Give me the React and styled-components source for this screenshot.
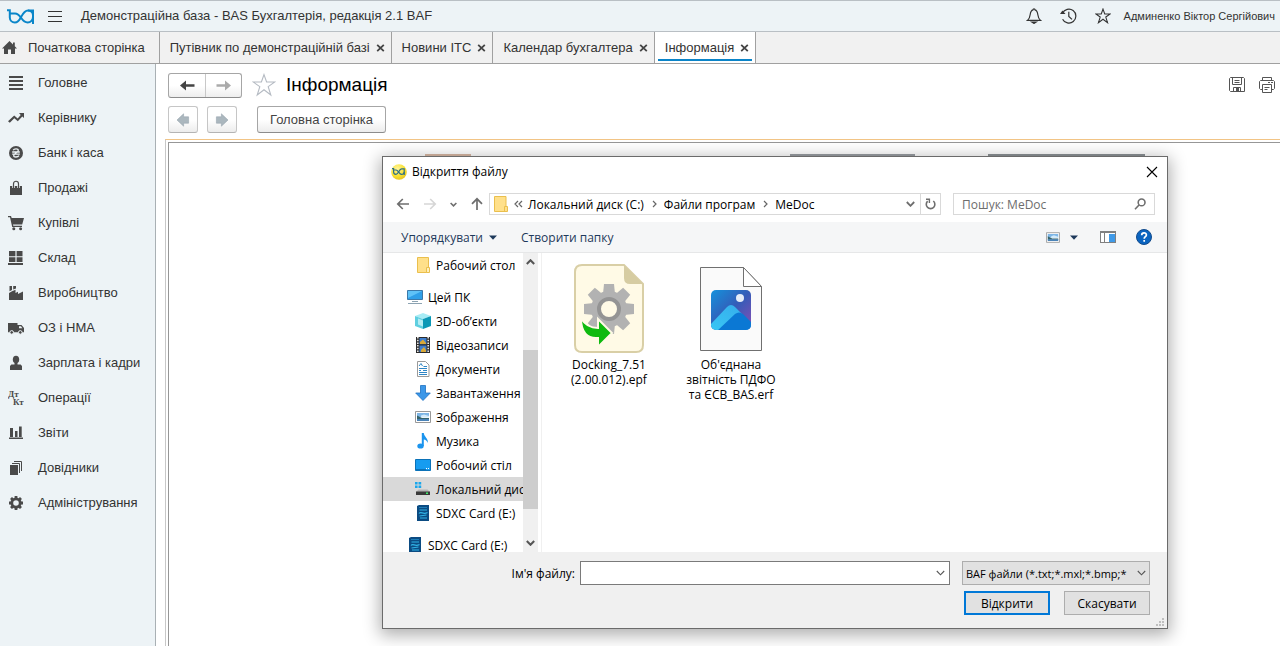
import React from 'react';
import styled, { createGlobalStyle, css } from 'styled-components';

const uiFont = '"Liberation Sans", Arial, sans-serif';
const dialogFont = '"Open Sans", "Noto Sans", sans-serif';

const GlobalStyle = createGlobalStyle`
  *, *::before, *::after { box-sizing: border-box; }
  body {
    margin: 0;
    background: #fff;
    color: #333;
    font: 13px/16px ${uiFont};
    overflow: hidden;
  }
  button, input, select { font: inherit; color: inherit; margin: 0; }
  svg { display: block; flex: none; }
  h1, h2, ul, nav { margin: 0; padding: 0; list-style: none; }
`;

/* ---------- application shell ---------- */

const Page = styled.div`
  display: flex;
  flex-direction: column;
  min-height: 100vh;
`;

const TopBar = styled.header`
  display: flex;
  align-items: center;
  height: 32px;
  padding: 0 5px 0 7px;
  background: #edf3f6;
  border-top: 1px solid #b9bfc4;
  border-bottom: 1px solid #b9bfc4;
`;

const PlainButton = styled.button`
  display: flex;
  align-items: center;
  justify-content: center;
  padding: 0;
  border: 0;
  background: none;
  cursor: pointer;
`;

const MenuButton = styled(PlainButton)`
  margin: 0 19px 0 13px;
`;

const AppTitle = styled.div`
  flex: 1;
  white-space: nowrap;
`;

const TopActions = styled.div`
  display: flex;
  gap: 18px;
  margin-right: 13px;
`;

const UserLink = styled.a`
  color: #333;
  font-size: 11px;
  text-decoration: none;
  white-space: nowrap;
`;

const TabStrip = styled.nav`
  display: flex;
  height: 32px;
  background: #f1f1f1;
  border-bottom: 1px solid #a0a0a0;
`;

const Tab = styled.div`
  position: relative;
  display: flex;
  align-items: center;
  gap: 6px;
  padding: 0 6px 0 10px;
  border-right: 1px solid #a0a0a0;
  white-space: nowrap;
  ${(p) => p.$home && css`
    gap: 11px;
    padding: 0 14px 0 2px;
  `}
  ${(p) => p.$active && css`
    background: #fff;
    &::after {
      content: '';
      position: absolute;
      left: 3px;
      right: 3px;
      bottom: 2px;
      height: 2px;
      background: #0a84c8;
    }
  `}
`;

const TabLabel = styled.a`
  color: #333;
  text-decoration: none;
`;

const Main = styled.div`
  display: flex;
  flex: 1;
`;

const Sidebar = styled.nav`
  flex: none;
  width: 156px;
  padding-top: 1px;
  background: #edf3f6;
  border-right: 1px solid #a9b0b4;
`;

const SideLink = styled.a`
  display: flex;
  align-items: center;
  gap: 14px;
  height: 35px;
  padding-left: 8px;
  color: #333;
  text-decoration: none;
  white-space: nowrap;
`;

const Content = styled.main`
  display: flex;
  flex: 1;
  flex-direction: column;
  min-width: 0;
`;

const HeadRow = styled.div`
  display: flex;
  align-items: center;
  height: 26px;
  margin: 8px 5px 0 12px;
`;

const ButtonPair = styled.div`
  display: flex;
  height: 25px;
  border: 1px solid #a6a6a6;
  border-bottom-color: #8c8c8c;
  border-radius: 3px;
  background: linear-gradient(#fff 50%, #eee);
`;

const HistoryButton = styled(PlainButton)`
  width: 36px;
  & + & { border-left: 1px solid #c8c8c8; }
`;

const StarButton = styled(PlainButton)`
  margin: 0 10px;
`;

const PageTitle = styled.h1`
  flex: 1;
  color: #000;
  font-size: 19px;
  font-weight: 400;
  line-height: 24px;
`;

const HeadActions = styled.div`
  display: flex;
  gap: 14px;
`;

const ToolRow = styled.div`
  display: flex;
  gap: 9px;
  margin: 8px 0 0 12px;
`;

const RaisedButton = styled(PlainButton)`
  width: ${(p) => p.$width}px;
  height: 27px;
  border: 1px solid ${(p) => (p.disabled ? '#c6c6c6' : '#a6a6a6')};
  border-bottom-color: ${(p) => (p.disabled ? '#b4b4b4' : '#8c8c8c')};
  border-radius: 3px;
  background: linear-gradient(#fff 50%, #ececec);
  margin-left: ${(p) => (p.$spaced ? 11 : 0)}px;
  color: #444;
  font-size: 13px;
`;

const DocFrame = styled.section`
  display: flex;
  flex: 1;
  margin: 6px 0 0 9px;
  padding: 2px 0 0 2px;
  border-top: 1px solid #f2c485;
  border-left: 1px solid #c8c8c8;
`;

const DocPage = styled.div`
  flex: 1;
  min-width: 0;
  padding-top: 11px;
  border-top: 1px solid #979797;
  border-left: 1px solid #979797;
`;

const Banner = styled.div`
  display: flex;
  height: 3px;
  padding-left: 256px;
`;

const BannerPart = styled.div`
  width: ${(p) => p.$width}px;
  margin-right: ${(p) => p.$gap}px;
  background: ${(p) => p.$color};
`;

/* ---------- file dialog ---------- */

const Dialog = styled.section`
  position: absolute;
  top: 156px;
  left: 382px;
  right: 112px;
  border: 1px solid #6b6b6b;
  background: #fff;
  color: #000;
  font: 12px/15px ${dialogFont};
  box-shadow: 0 4px 16px 2px rgba(0, 0, 0, 0.32);
`;

const DialogTitleBar = styled.div`
  display: flex;
  align-items: center;
  gap: 5px;
  height: 29px;
  padding: 0 9px 0 8px;
`;

const DialogTitle = styled.h2`
  flex: 1;
  font-size: 12px;
  font-weight: 400;
`;

const NavRow = styled.div`
  display: flex;
  align-items: center;
  height: 36px;
  padding: 0 12px 0 13px;
`;

const NavButtons = styled.div`
  display: flex;
  align-items: center;
  gap: 13px;
  width: 93px;
`;

const AddressBar = styled.div`
  display: flex;
  flex: 1;
  align-items: center;
  gap: 5px;
  height: 22px;
  padding-left: 4px;
  border: 1px solid #d9d9d9;
  white-space: nowrap;
`;

const Crumb = styled.a`
  color: #000;
  text-decoration: none;
`;

const AddressTools = styled.div`
  display: flex;
  align-self: stretch;
  margin-left: auto;
`;

const AddressButton = styled(PlainButton)`
  width: 20px;
  & + & { border-left: 1px solid #d9d9d9; }
`;

const SearchBox = styled.label`
  display: flex;
  align-items: center;
  width: 202px;
  height: 22px;
  margin-left: 12px;
  padding: 0 8px;
  border: 1px solid #d9d9d9;
`;

const SearchInput = styled.input`
  flex: 1;
  min-width: 0;
  padding: 0;
  border: 0;
  outline: 0;
  background: none;
  &::placeholder { color: #6d6d6d; opacity: 1; }
`;

const CommandBar = styled.div`
  display: flex;
  align-items: center;
  height: 31px;
  padding: 0 15px 0 18px;
  background: #f5f6f7;
  border-bottom: 1px solid #e6e7e8;
  color: #1e395b;
`;

const Command = styled(PlainButton)`
  gap: 6px;
  margin-right: ${(p) => p.$after}px;
`;

const CommandSpacer = styled.div`
  flex: 1;
`;

const Explorer = styled.div`
  display: flex;
  height: 299px;
`;

const Tree = styled.ul`
  width: 140px;
  overflow: hidden;
`;

const TreeItem = styled.li`
  display: flex;
  align-items: center;
  gap: 5px;
  height: 24px;
  margin-top: ${(p) => (p.$root ? 8 : 0)}px;
  padding-left: ${(p) => (p.$root ? 24 : 32)}px;
  background: ${(p) => (p.$selected ? '#d9d9d9' : 'transparent')};
  white-space: nowrap;
`;

const ScrollBar = styled.div`
  display: flex;
  flex-direction: column;
  width: 15px;
  background: #f0f0f0;
`;

const ScrollButton = styled(PlainButton)`
  height: 18px;
`;

const ScrollTrack = styled.div`
  flex: 1;
  padding-top: 79px;
`;

const ScrollThumb = styled.div`
  height: 159px;
  background: #cdcdcd;
`;

const FileList = styled.ul`
  display: flex;
  flex: 1;
  align-items: flex-start;
  gap: 22px;
  margin-left: 3px;
  padding: 11px 0 0 17px;
  border-left: 1px solid #f0f0f0;
`;

const FileItem = styled.li`
  display: flex;
  flex-direction: column;
  align-items: center;
  gap: 4px;
  width: 100px;
  text-align: center;
`;

const FileName = styled.span`
  width: 92px;
`;

const DialogFooter = styled.form`
  display: flex;
  flex-direction: column;
  gap: 6px;
  padding: 9px 17px 13px;
  background: #f0f0f0;
`;

const FooterRow = styled.div`
  display: flex;
  align-items: center;
  justify-content: flex-end;
  gap: ${(p) => p.$gap}px;
`;

const NameLabel = styled.label`
  width: 175px;
  margin-right: 5px;
  text-align: right;
`;

const ComboBox = styled.div`
  display: flex;
  flex: 1;
  height: 24px;
  border: 1px solid #7a7a7a;
  background: #fff;
`;

const ComboInput = styled.input`
  flex: 1;
  min-width: 0;
  padding: 0 4px;
  border: 0;
  outline: 0;
`;

const ComboButton = styled(PlainButton)`
  width: 17px;
`;

const SelectWrap = styled.div`
  position: relative;
  width: 188px;
  margin-left: 12px;
  & > svg {
    position: absolute;
    top: 9px;
    right: 4px;
    pointer-events: none;
  }
`;

const TypeSelect = styled.select`
  appearance: none;
  display: block;
  width: 100%;
  height: 24px;
  padding: 0 17px 0 3px;
  border: 1px solid #adadad;
  border-radius: 0;
  background: #e1e1e1;
  font-size: 11px;
  text-overflow: clip;
`;

const DialogButton = styled.button`
  width: 86px;
  height: 24px;
  padding: 0;
  border: ${(p) => (p.$primary ? '2px solid #0078d7' : '1px solid #adadad')};
  background: #e1e1e1;
`;

const ResizeGrip = styled.svg`
  position: absolute;
  right: 3px;
  bottom: 2px;
`;

/* ---------- icons ---------- */

const Icon = ({ w = 16, h = w, box, children, ...rest }) => (
  <svg width={w} height={h} viewBox={box || `0 0 ${w} ${h}`} fill="none" aria-hidden="true" {...rest}>
    {children}
  </svg>
);

const Logo = () => (
  <Icon w={28} h={15} stroke="#0a86c9" strokeWidth="2">
    <path d="M0 1.2H2.8V8.6A5 5 0 0 0 7.8 13.5C11.4 13.5 12.8 10.6 14.3 7.6C15.9 4.4 17.4 1.4 21 1.4H26V15" />
    <path d="M2.8 4.6H8C10.8 4.6 12.5 6.6 14.2 9C16 11.600 17.600 13.500 20.6 13.5A5.4 5.400 0 0 0 26 8V6A5 5 0 0 0 21 1.4" />
  </Icon>
);

const Burger = () => (
  <Icon w={14} h={11} stroke="#333" shapeRendering="crispEdges">
    <path d="M0 .5H14M0 5.5H14M0 10.5H14" />
  </Icon>
);

const Bell = () => (
  <Icon stroke="#333" strokeWidth="1.2">
    <path d="M1.5 12.4C3.2 11 3.9 9.3 4.2 6.5C4.5 4 5.6 2.2 7 1.8C7 .6 9 .6 9 1.8C10.4 2.2 11.5 4 11.8 6.5C12.1 9.3 12.8 11 14.5 12.4Z" />
    <path d="M6 14.2H10L8 15.4Z" fill="#333" />
  </Icon>
);

const HistoryIcon = () => (
  <Icon w={17} h={16} stroke="#333" strokeWidth="1.2">
    <path d="M2.5 5.2A7 7 0 1 1 2.6 11.2" />
    <path d="M0 6H5.5L2.4 2.6Z" fill="#333" stroke="none" />
    <path d="M8.8 3.8V8.4L12 11.4" />
  </Icon>
);

const Star = ({ size = 16, color = '#333' }) => (
  <Icon w={size} box="0 0 24 24" stroke={color} strokeWidth={(24 / size) * 1.1}>
    <path d="M12 1.600L14.600 9H22.800L16.200 13.600L18.800 22L12 16.800L5.200 22L7.800 13.600L1.200 9H9.400Z" />
  </Icon>
);

const Home = () => (
  <Icon w={15} h={14}>
    <path fill="#4a4a4a" d="M7.5 0L11 3.400V1.500H12.800V5.200L15 7.400H13V13H9V8.500H6V13H2V7.400H0Z" />
  </Icon>
);

const TabClose = () => (
  <Icon w={9} h={8} stroke="#444" strokeWidth="1.8">
    <path d="M1.2 .8L7.8 7.2M7.8 .8L1.2 7.2" />
  </Icon>
);

const Arrow = ({ left, color }) => (
  <Icon w={15} h={11}>
    <path fill={color} transform={left ? undefined : 'translate(15 0) scale(-1 1)'} d="M0 5.5L6 .5V4.3H14.500V6.700H6V10.500Z" />
  </Icon>
);

const BlockArrow = ({ left }) => (
  <Icon w={14} h={14}>
    <path fill="#abb7be" stroke="#98a6ae" strokeWidth=".6" transform={left ? undefined : 'translate(14 0) scale(-1 1)'} d="M1 7L7.6 .8V3.8H12.6V10.2H7.6V13.2Z" />
  </Icon>
);

const Save = () => (
  <Icon w={16} stroke="#555">
    <path d="M.5 1.500L1.500 .5H14.500L15.500 1.500V14.500H1.500L.5 13.500Z" />
    <path d="M3.500 .5V7.500H12.500V.5M5.500 3.500H10.500M5.500 5.500H10.500M4.500 14.500V10.500H11.500V14.500" />
    <path fill="#555" stroke="none" d="M7 11H10V15H7Z" />
  </Icon>
);

const Printer = () => (
  <Icon w={16} stroke="#555">
    <path d="M3.500 3.500V.5H12.500V3.500M3.500 12.500H1.500L.5 11.500V4.500L1.500 3.500H14.500L15.500 4.500V11.500L14.500 12.500H12.500" />
    <path d="M3.500 7.500H12.500V15.500H3.500ZM5.500 10.500H10.500M5.500 12.500H8.500M9 5.500H11M12 5.500H14" />
  </Icon>
);

const dark = '#4a4a4a';

const sideIcons = {
  main: <path d="M1 1H15V3H1ZM1 5H15V7H1ZM1 9H15V11H1ZM1 13H15V15H1Z" />,
  trend: <path d="M11 3H16V8L14.3 6.5L9.8 11.2L6.3 8.2L1.8 12.8L0 11.3L6.2 5.4L9.7 8.4L12.7 5Z" />,
  bank: (
    <>
      <circle cx="8" cy="8" r="7" />
      <path d="M5.2 5.2C6 3.5 10.3 3.3 10.3 5.4C10.3 7.3 5.7 8.2 5.7 10.4C5.7 12.6 10 12.4 10.9 10.6M4.2 7H11.8M4.2 9.1H11.8" fill="none" stroke="#edf3f6" strokeWidth="1.3" />
    </>
  ),
  bag: (
    <>
      <path d="M2 6H14V15H2Z" />
      <path d="M5.500 8V3.800C5.500 .4 10.500 .4 10.500 3.800V8" fill="none" stroke="#edf3f6" strokeWidth="2.600" />
      <path d="M5.500 8V3.800C5.500 .4 10.500 .4 10.500 3.800V8" fill="none" stroke={dark} strokeWidth="1.2" />
    </>
  ),
  cart: (
    <>
      <path d="M0 1H3L3.7 3H16L14.2 9.5H5L5.3 10.7H14V12H4.2L2 2.3H0Z" />
      <circle cx="5.8" cy="13.7" r="1.5" />
      <circle cx="12.6" cy="13.7" r="1.5" />
    </>
  ),
  store: <path d="M1 1H7.4V6.3H1ZM8.6 1H14.5V6.3H8.6ZM1 7.3H7.4V12H1ZM8.6 7.3H14.5V12H8.6ZM0 13H15V15H0Z" />,
  factory: <path d="M1 15V8L4 6.300L7.500 4.800V8L10 6.800V9L15 6.500V15ZM1.500 1H4V5L1.500 6.200ZM5.200 1H8V3.400L5.200 4.600Z" />,
  truck: (
    <>
      <path d="M0 3H9.5V5H13.5L16 8V12.3H0Z" />
      <path d="M11 6.2H13L14.4 8.3H11Z" fill="#edf3f6" />
      <circle cx="3.7" cy="12.4" r="1.8" stroke="#edf3f6" strokeWidth="1" />
      <circle cx="12.3" cy="12.4" r="1.8" stroke="#edf3f6" strokeWidth="1" />
    </>
  ),
  person: (
    <>
      <ellipse cx="8" cy="4.600" rx="3.200" ry="3.800" />
      <path d="M6.5 7.5H9.5V9.5H12.6L14 11V15H2V11L3.4 9.5H6.5Z" />
    </>
  ),
  chart: <path d="M2 3H5V12H2ZM7 6H9.5V12H7ZM11 1.5H13.7V12H11ZM1 12.6H15V14H1Z" />,
  books: (
    <>
      <path d="M2 5H10V15H2Z" />
      <path d="M4 3.500H11.500V13M6 1.500H13.500V11" fill="none" stroke={dark} />
    </>
  ),
  gear: (
    <>
      <circle cx="8" cy="8" r="4.2" fill="none" stroke={dark} strokeWidth="2.8" />
      <path d="M8 1V3M8 13V15M1 8H3M13 8H15M3 3L4.6 4.6M11.4 11.4L13 13M13 3L11.4 4.6M4.6 11.4L3 13" stroke={dark} strokeWidth="2.8" />
    </>
  ),
  debit: (
    <text fontFamily="Liberation Serif" fontWeight="700" fontSize="9">
      <tspan x="0" y="7">Дт</tspan>
      <tspan x="5" y="15">Кт</tspan>
    </text>
  ),
};

const SideIcon = ({ name }) => <Icon><g fill={dark}>{sideIcons[name]}</g></Icon>;

const AppBadge = () => (
  <Icon>
    <defs>
      <radialGradient id="badge" cx=".4" cy=".3" r=".8">
        <stop offset="0" stopColor="#fff59a" />
        <stop offset=".6" stopColor="#f8e02e" />
        <stop offset="1" stopColor="#dfb91c" />
      </radialGradient>
    </defs>
    <circle cx="8" cy="8" r="7.8" fill="url(#badge)" />
    <g stroke="#2c6f86" strokeWidth="1.2">
      <path d="M1 4.600H2.600V8A2.400 2.400 0 0 0 5 10.400C7.400 10.400 8 4.800 10.600 4.800H13.200V11" />
      <path d="M2.600 6H5C7.400 6 8 10.400 10.600 10.400A2.500 2.500 0 0 0 13.200 8" />
    </g>
  </Icon>
);

const DialogClose = () => (
  <Icon w={12} stroke="#000" strokeWidth="1.1"><path d="M1 1L11 11M11 1L1 11" /></Icon>
);

const NavArrow = ({ turn = 0, color = '#6e6e6e' }) => (
  <Icon w={14} stroke={color} strokeWidth="1.7">
    <g transform={`rotate(${turn} 7 7)`}><path d="M13 7H1.8M6.8 2L1.8 7L6.8 12" /></g>
  </Icon>
);

const Chevron = ({ w = 9, h = 6, color = '#555', up, weight = 1.5 }) => (
  <Icon w={w} h={h} box="0 0 9 6" stroke={color} strokeWidth={weight}>
    <path d={up ? 'M.8 5L4.5 1.2L8.2 5' : 'M.8 1L4.5 4.8L8.2 1'} />
  </Icon>
);

const CrumbArrow = ({ double }) => (
  <Icon w={10} h={8} stroke="#666" strokeWidth="1.2">
    <path d={double ? 'M5 1L2 4L5 7M9 1L6 4L9 7' : 'M4 1L7 4L4 7'} />
  </Icon>
);

const FolderIcon = () => (
  <Icon w={14} h={16}>
    <path fill="#ffe08a" stroke="#eabf4d" d="M.5 .5H12V10.5H13.5V15.5H.5Z" />
    <path stroke="#eabf4d" d="M10.5 15.5V10.5H13" />
  </Icon>
);

const Refresh = () => (
  <Icon w={11} h={12} stroke="#6e6e6e" strokeWidth="1.6">
    <path d="M8.3 3A4.3 4.3 0 1 1 2.6 3.2" />
    <path d="M1 1.2H4.4V5" strokeWidth="1.4" />
  </Icon>
);

const Magnifier = () => (
  <Icon w={12} h={12} stroke="#6e6e6e" strokeWidth="1.6">
    <circle cx="7.6" cy="4.4" r="3.4" />
    <path d="M5 7L1 11.2" />
  </Icon>
);

const Caret = () => (
  <Icon w={8} h={5}><path fill="#1e395b" d="M0 .5H8L4 4.8Z" /></Icon>
);

const PictureIcon = ({ w = 14, h = 11 }) => (
  <Icon w={w} h={h} box="0 0 16 12">
    <path fill="#fff" stroke="#999" d="M.5 .5H15.5V11.5H.5Z" />
    <path fill="#7eb6e6" d="M2 2H14V6H2Z" />
    <path fill="#d3eafa" d="M6 4.5L9 3.5L14 5V6.5H6Z" />
    <path fill="#35646b" d="M2 4.5L7 7H14V8.5H2Z" />
    <path fill="#4a83b8" d="M2 8H14V10H2Z" />
  </Icon>
);

const PaneIcon = () => (
  <Icon w={16} h={12} shapeRendering="crispEdges">
    <path fill="#fff" stroke="#808080" d="M.5 .5H15.5V11.5H.5Z" />
    <path fill="#808080" d="M0 0H16V2H0ZM4 2H5V12H4Z" />
    <path fill="#3f9ae8" d="M9 3H15V11H9Z" />
  </Icon>
);

const HelpIcon = () => (
  <Icon>
    <circle cx="8" cy="8" r="7.5" fill="#0a64c0" stroke="#124b8c" />
    <path d="M5.7 6.2C5.7 3 10.4 3.1 10.4 5.9C10.4 7.6 8.2 7.6 8.2 9.7M8.2 11V12.8" stroke="#fff" strokeWidth="1.7" />
  </Icon>
);

const SdCard = () => (
  <Icon>
    <path fill="#0b4b82" d="M2 1L4 0H14V16H2Z" />
    <path d="M4.5 5H12M4 8.5C6 6 8 10 12.5 7.5M4.5 11L11.5 10M5 13H12" stroke="#31b4e6" strokeWidth="1.2" />
    <path d="M4 2.5H12" stroke="#1c7db8" />
  </Icon>
);

const treeIcons = {
  folder: <g transform="translate(1 0)"><path fill="#ffe08a" stroke="#eabf4d" d="M1.5 .5H12.5V15.5H1.5Z" /><path fill="#fff0bd" stroke="#eabf4d" d="M10.5 10.5H13.5V15.5H10.5Z" /></g>,
  pc: (
    <>
      <path fill="#2f9fe8" stroke="#3c78a8" d="M.5 1.5H15.5V10.5H.5Z" />
      <path fill="#5fc2f7" d="M1 2H15L1 9Z" />
      <path stroke="#8ca3b2" d="M5 12.5H11M1 14.5H15" />
    </>
  ),
  cube: (
    <>
      <path fill="#a8ecf5" d="M0 3L8 0L16 3L8 6Z" />
      <path fill="#5fcfe0" d="M0 3L8 6V16L0 13Z" />
      <path fill="#0b98b6" d="M16 3L8 6V16L16 13Z" />
      <path fill="#d9f9fc" d="M3 5.500L8 7.500V13.500L3 11.500Z" opacity=".7" />
    </>
  ),
  film: (
    <>
      <path fill="#2b2b2b" d="M1 0H15V16H1Z" />
      <path stroke="#e6e6e6" strokeWidth="1.6" strokeDasharray="1.5 1.2" d="M2.8 0V16M13.2 0V16" />
      <path fill="#3e7fd0" d="M4.5 1H11.5V7.3H4.5ZM4.5 8.6H11.5V15H4.5Z" />
      <path fill="#d9a938" d="M5 5L8 2.5L11 6V7H5ZM6 13L9 10L11 13V15H6Z" />
    </>
  ),
  doc: (
    <>
      <path fill="#fff" stroke="#9a9a9a" d="M2.5 .5H10.5L14 4V15.5H2.5Z" />
      <path stroke="#2e86c6" d="M4 5L6 2.5L7.5 5M8.5 5.5H12M4 7.5H12M4 9.5H6M8 9.5H12M4 11.5H12M4 13.5H12" />
    </>
  ),
  download: <path fill="#3b97e8" stroke="#1d70c0" strokeWidth=".8" d="M5.5 .5H10.5V8H15.3L8 15.5L.7 8H5.5Z" />,
  music: (
    <>
      <ellipse cx="5.5" cy="13" rx="3.2" ry="2.6" fill="#1b94ee" />
      <path fill="#1b94ee" d="M6.8 0H8.8C9 4 13.5 5 12.8 10C12 7.5 10.5 6.8 8.8 6.5V13H6.8Z" />
    </>
  ),
  desktop: (
    <>
      <path fill="#169cf0" stroke="#0b72b8" d="M.5 2.5H15.5V13.5H.5Z" />
      <path stroke="#fff" strokeDasharray="1 1" d="M11 11.5H14.5" />
      <path stroke="#0b72b8" d="M1 12.5H11" />
    </>
  ),
  disk: (
    <>
      <path fill="#1aa7ec" d="M0 1H2.600V3.500H0ZM3.500 1H6.200V3.500H3.500ZM0 4.400H2.600V7H0ZM3.500 4.400H6.200V7H3.500Z" />
      <path fill="#b5b5b5" d="M3.500 8.500H12.500L15 11H1Z" />
      <path fill="#3a3a3a" d="M1 10.500H15V14H1Z" />
      <path fill="#3df06b" d="M11 11.600H13V13H11Z" />
    </>
  ),
};

const TreeIcon = ({ name }) => {
  if (name === 'sd') return <SdCard />;
  if (name === 'picture') return <PictureIcon w={16} h={12} />;
  return <Icon>{treeIcons[name]}</Icon>;
};

const EpfIcon = () => (
  <Icon w={70} h={89}>
    <path fill="#fffae6" stroke="#d9cfa6" strokeWidth="2" d="M8 1H50L69 20V81Q69 88 62 88H8Q1 88 1 81V8Q1 1 8 1Z" />
    <path fill="#d6cca2" d="M50 1L69 20H56Q50 20 50 14Z" />
    <g transform="translate(35 45)">
      <g fill="#b2b2b2">
        <circle r="18" />
        {[0, 45, 90, 135, 180, 225, 270, 315].map((a) => (
          <path key={a} transform={`rotate(${a})`} d="M-5 -25H5L6 -15H-6Z" />
        ))}
      </g>
      <circle r="10" fill="#fffae6" stroke="#949494" strokeWidth="4" />
    </g>
    <path fill="#0fba0f" stroke="#fffae6" strokeWidth="2" d="M7 54C11 61 16 64 24 64V55L38 69L24 83V74C13 75 7 68 7 54Z" />
  </Icon>
);

const ErfIcon = () => (
  <Icon w={64} h={89}>
    <defs>
      <linearGradient id="sky" x1="0" y1="0" x2="1" y2="1">
        <stop offset="0" stopColor="#1492dc" />
        <stop offset=".5" stopColor="#345cb8" />
        <stop offset="1" stopColor="#8a4db5" />
      </linearGradient>
      <linearGradient id="hill" x1="0" y1="1" x2="1" y2="0">
        <stop offset="0" stopColor="#39c8f5" />
        <stop offset="1" stopColor="#35a9ea" />
      </linearGradient>
      <clipPath id="tile"><rect x="12" y="26" width="40" height="40" rx="5" /></clipPath>
    </defs>
    <path fill="#fafafa" stroke="#707070" d="M1.5 3.5H44.5L62.5 22.5V86.5H1.5Z" />
    <path fill="#fff" stroke="#707070" d="M44.5 3.5V22.5H62.5Z" />
    <g clipPath="url(#tile)">
      <path fill="url(#sky)" d="M12 26H52V66H12Z" />
      <path fill="url(#hill)" d="M10 62L28 43Q32 39 36 43L56 63V68H10Z" />
      <path fill="#0b78d4" d="M17 68L36 50Q40 47 44 50L56 62V68Z" />
      <circle cx="41" cy="34" r="4" fill="#e4ecf8" />
    </g>
  </Icon>
);

/* ---------- data ---------- */

const tabs = ['Путівник по демонстраційній базі', 'Новини ІТС', 'Календар бухгалтера', 'Інформація'];

const sections = [
  ['main', 'Головне'],
  ['trend', 'Керівнику'],
  ['bank', 'Банк і каса'],
  ['bag', 'Продажі'],
  ['cart', 'Купівлі'],
  ['store', 'Склад'],
  ['factory', 'Виробництво'],
  ['truck', 'ОЗ і НМА'],
  ['person', 'Зарплата і кадри'],
  ['debit', 'Операції'],
  ['chart', 'Звіти'],
  ['books', 'Довідники'],
  ['gear', 'Адміністрування'],
];

const places = [
  { icon: 'folder', name: 'Рабочий стол' },
  { icon: 'pc', name: 'Цей ПК', root: true },
  { icon: 'cube', name: '3D-об’єкти' },
  { icon: 'film', name: 'Відеозаписи' },
  { icon: 'doc', name: 'Документи' },
  { icon: 'download', name: 'Завантаження' },
  { icon: 'picture', name: 'Зображення' },
  { icon: 'music', name: 'Музика' },
  { icon: 'desktop', name: 'Робочий стіл' },
  { icon: 'disk', name: 'Локальний диск (C:)', selected: true },
  { icon: 'sd', name: 'SDXC Card (E:)' },
  { icon: 'sd', name: 'SDXC Card (E:)', root: true },
];

const path = ['Локальний диск (C:)', 'Файли програм', 'MeDoc'];

/* ---------- views ---------- */

const FileDialog = () => (
  <Dialog role="dialog" aria-labelledby="dialog-title">
    <DialogTitleBar>
      <AppBadge />
      <DialogTitle id="dialog-title">Відкриття файлу</DialogTitle>
      <PlainButton type="button" aria-label="Закрити"><DialogClose /></PlainButton>
    </DialogTitleBar>
    <NavRow>
      <NavButtons>
        <PlainButton type="button" aria-label="Назад"><NavArrow /></PlainButton>
        <PlainButton type="button" aria-label="Вперед" disabled><NavArrow turn={180} color="#d6d6d6" /></PlainButton>
        <PlainButton type="button" aria-label="Останні"><Chevron w={7} h={5} color="#6e6e6e" weight={2} /></PlainButton>
        <PlainButton type="button" aria-label="Вгору"><NavArrow turn={90} /></PlainButton>
      </NavButtons>
      <AddressBar>
        <FolderIcon />
        <CrumbArrow double />
        {path.map((name, i) => (
          <React.Fragment key={name}>
            {i > 0 && <CrumbArrow />}
            <Crumb href="#">{name}</Crumb>
          </React.Fragment>
        ))}
        <AddressTools>
          <AddressButton type="button" aria-label="Попередні розташування"><Chevron color="#6e6e6e" weight={1.8} /></AddressButton>
          <AddressButton type="button" aria-label="Оновити"><Refresh /></AddressButton>
        </AddressTools>
      </AddressBar>
      <SearchBox>
        <SearchInput type="text" placeholder="Пошук: MeDoc" aria-label="Пошук: MeDoc" />
        <Magnifier />
      </SearchBox>
    </NavRow>
    <CommandBar>
      <Command type="button" $after={24}>Упорядкувати <Caret /></Command>
      <Command type="button" $after={0}>Створити папку</Command>
      <CommandSpacer />
      <Command type="button" aria-label="Вигляд" $after={10}><PictureIcon /></Command>
      <Command type="button" aria-label="Інші параметри" $after={22}><Caret /></Command>
      <Command type="button" aria-label="Область перегляду" $after={20}><PaneIcon /></Command>
      <Command type="button" aria-label="Довідка" $after={0}><HelpIcon /></Command>
    </CommandBar>
    <Explorer>
      <Tree>
        {places.map((p, i) => (
          <TreeItem key={i} $root={p.root} $selected={p.selected}>
            <TreeIcon name={p.icon} />
            {p.name}
          </TreeItem>
        ))}
      </Tree>
      <ScrollBar>
        <ScrollButton type="button" aria-label="Прокрутити вгору"><Chevron up weight={2} /></ScrollButton>
        <ScrollTrack><ScrollThumb /></ScrollTrack>
        <ScrollButton type="button" aria-label="Прокрутити вниз"><Chevron weight={2} /></ScrollButton>
      </ScrollBar>
      <FileList>
        <FileItem><EpfIcon /><FileName>Docking_7.51 (2.00.012).epf</FileName></FileItem>
        <FileItem><ErfIcon /><FileName>Об'єднана звітність ПДФО та ЄСВ_BAS.erf</FileName></FileItem>
      </FileList>
    </Explorer>
    <DialogFooter onSubmit={(e) => e.preventDefault()}>
      <FooterRow $gap={0}>
        <NameLabel htmlFor="file-name">Ім'я файлу:</NameLabel>
        <ComboBox>
          <ComboInput id="file-name" type="text" />
          <ComboButton type="button" aria-label="Показати список"><Chevron weight={1.1} /></ComboButton>
        </ComboBox>
        <SelectWrap>
          <TypeSelect aria-label="Тип файлу">
            <option>BAF файли (*.txt;*.mxl;*.bmp;*</option>
          </TypeSelect>
          <Chevron weight={1.1} />
        </SelectWrap>
      </FooterRow>
      <FooterRow $gap={14}>
        <DialogButton type="submit" $primary>Відкрити</DialogButton>
        <DialogButton type="button">Скасувати</DialogButton>
      </FooterRow>
    </DialogFooter>
    <ResizeGrip width="8" height="8" viewBox="0 0 8 8" fill="#bfbfbf" aria-hidden="true">
      <path d="M6 0H8V2H6ZM3 3H5V5H3ZM6 3H8V5H6ZM0 6H2V8H0ZM3 6H5V8H3ZM6 6H8V8H6Z" />
    </ResizeGrip>
  </Dialog>
);

export default function App() {
  return (
    <>
      <GlobalStyle />
      <Page>
        <TopBar>
          <Logo />
          <MenuButton type="button" aria-label="Меню"><Burger /></MenuButton>
          <AppTitle>Демонстраційна база - BAS Бухгалтерія, редакція 2.1 BAF</AppTitle>
          <TopActions>
            <PlainButton type="button" aria-label="Сповіщення"><Bell /></PlainButton>
            <PlainButton type="button" aria-label="Історія"><HistoryIcon /></PlainButton>
            <PlainButton type="button" aria-label="Вибране"><Star /></PlainButton>
          </TopActions>
          <UserLink href="#">Админенко Віктор Сергійович</UserLink>
        </TopBar>
        <TabStrip>
          <Tab $home><Home /><TabLabel href="#">Початкова сторінка</TabLabel></Tab>
          {tabs.map((name, i) => (
            <Tab key={name} $active={i === tabs.length - 1}>
              <TabLabel href="#">{name}</TabLabel>
              <PlainButton type="button" aria-label="Закрити вкладку"><TabClose /></PlainButton>
            </Tab>
          ))}
        </TabStrip>
        <Main>
          <Sidebar>
            {sections.map(([icon, name]) => (
              <SideLink key={icon} href="#"><SideIcon name={icon} />{name}</SideLink>
            ))}
          </Sidebar>
          <Content>
            <HeadRow>
              <ButtonPair>
                <HistoryButton type="button" aria-label="Назад"><Arrow left color="#444" /></HistoryButton>
                <HistoryButton type="button" aria-label="Вперед"><Arrow color="#aaa" /></HistoryButton>
              </ButtonPair>
              <StarButton type="button" aria-label="Додати до вибраного"><Star size={24} color="#b4bac2" /></StarButton>
              <PageTitle>Інформація</PageTitle>
              <HeadActions>
                <PlainButton type="button" aria-label="Зберегти"><Save /></PlainButton>
                <PlainButton type="button" aria-label="Друк"><Printer /></PlainButton>
              </HeadActions>
            </HeadRow>
            <ToolRow>
              <RaisedButton type="button" aria-label="Попередня" disabled $width={30}><BlockArrow left /></RaisedButton>
              <RaisedButton type="button" aria-label="Наступна" disabled $width={30}><BlockArrow /></RaisedButton>
              <RaisedButton type="button" $width={129} $spaced>Головна сторінка</RaisedButton>
            </ToolRow>
            <DocFrame>
              <DocPage>
                <Banner>
                  <BannerPart $width={46} $gap={319} $color="#d9b9a5" />
                  <BannerPart $width={125} $gap={73} $color="#9a9fa3" />
                  <BannerPart $width={157} $gap={0} $color="#8d9296" />
                </Banner>
              </DocPage>
            </DocFrame>
          </Content>
        </Main>
      </Page>
      <FileDialog />
    </>
  );
}
